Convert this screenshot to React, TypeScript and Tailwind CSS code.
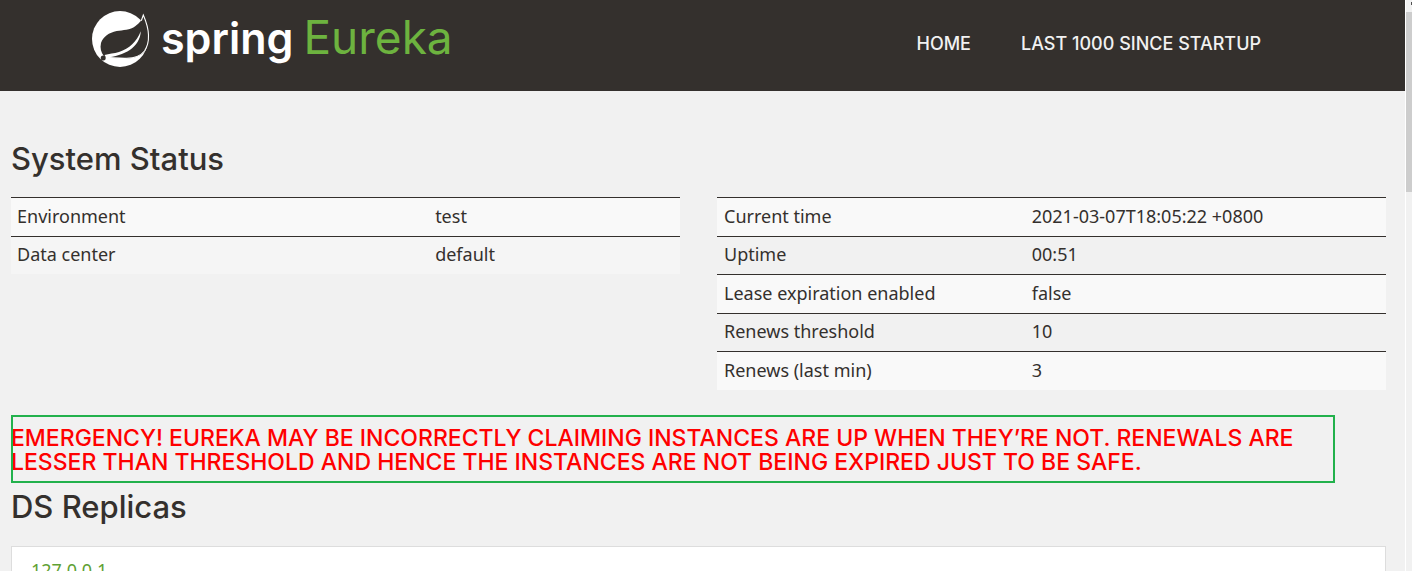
import React from "react";

type Row = { label: string; value: string };

const environmentRows: Row[] = [
  { label: "Environment", value: "test" },
  { label: "Data center", value: "default" },
];

const runtimeRows: Row[] = [
  { label: "Current time", value: "2021-03-07T18:05:22 +0800" },
  { label: "Uptime", value: "00:51" },
  { label: "Lease expiration enabled", value: "false" },
  { label: "Renews threshold", value: "10" },
  { label: "Renews (last min)", value: "3" },
];

function SpringLeaf() {
  return (
    <svg viewBox="0 0 58 58" className="size-[58px] shrink-0 overflow-visible" aria-hidden="true">
      <circle cx="29" cy="29" r="28" fill="#fff" />
      <path
        d="M52.3 5C51.5 9 49 13 44.5 16C39 20.2 32 20 25.7 21C18 22.5 12 27 10 33C8.8 38 10 42.5 13 46.3C20 48.5 29 48.4 35.7 48.3C43 48.2 49 46.5 53.5 41.5C60 32.5 57.5 17 52.3 5Z"
        fill="#34302d"
      />
      <path
        d="M50.3 10.8L52.3 5C57.5 17 60 31 53.5 41C49 46.8 43 48.2 35.7 48.3C29 48.5 23 47.8 15 47.4"
        fill="none"
        stroke="#fff"
        strokeWidth="1.1"
      />
      <path
        d="M49.8 21.3C45.5 32 38.5 38.5 28 42C23 43.6 18 43.6 13.5 45L15 47.6C33 46 49 37.5 49.8 21.3Z"
        fill="#fff"
      />
      <circle cx="12.2" cy="48" r="2.5" fill="#34302d" />
    </svg>
  );
}

function StatusTable({ caption, rows, labelCell, valueCell, evenRow }: { caption: string; rows: Row[]; labelCell: string; valueCell: string; evenRow: string }) {
  return (
    <table aria-label={caption} className="w-full table-fixed border-separate border-spacing-0 text-left text-lg leading-6">
      <tbody>
        {rows.map((row) => (
          <tr key={row.label} className={`odd:h-[39px] even:h-[38px] odd:bg-[#f9f9f9] ${evenRow}`}>
            <th scope="row" className={`border-t border-[#34302d] pb-[3px] font-normal ${labelCell}`}>
              {row.label}
            </th>
            <td className={`border-t border-[#34302d] pb-[3px] ${valueCell}`}>{row.value}</td>
          </tr>
        ))}
      </tbody>
    </table>
  );
}

export default function App() {
  return (
    <div className="flex h-screen overflow-hidden bg-[#f1f1f1] font-['Noto_Sans',sans-serif] text-[#34302d]">
      <div className="min-w-0 flex-1 overflow-hidden">
        <header className="flex h-[91px] items-start justify-between bg-[#34302d] pr-36 pl-[91px]">
          <a href="#home" className="flex items-start gap-3 pt-[10px] whitespace-nowrap">
            <SpringLeaf />
            <span className="flex items-baseline gap-[10px] font-['Inter',sans-serif] leading-[54px]">
              <span className="text-[43px] font-semibold text-white">spring</span>
              <span className="text-[46px] text-[#6db33f]">Eureka</span>
            </span>
          </a>
          <nav className="flex gap-[50px] pt-8 font-['Inter',sans-serif] text-[18px] leading-6 font-medium whitespace-nowrap text-[#f1f1f1]">
            <a href="#home">HOME</a>
            <a href="#lastn">LAST 1000 SINCE STARTUP</a>
          </nav>
        </header>

        <main className="pr-[19px] pl-[11px]">
          <h1 className="pt-[50px] font-['Inter',sans-serif] text-[31px] leading-9 font-medium">System Status</h1>
          <div className="mt-5 grid grid-cols-2 items-start gap-[37px]">
            <StatusTable
              caption="Environment"
              rows={environmentRows}
              labelCell="w-[62.5%] px-[6px]"
              valueCell="px-[6px]"
              evenRow="even:bg-[#f5f5f5]"
            />
            <StatusTable
              caption="Runtime"
              rows={runtimeRows}
              labelCell="w-[46%] px-[7px]"
              valueCell="px-[7px]"
              evenRow="even:bg-[#f1f1f1]"
            />
          </div>

          <h4 className="mt-[25px] mr-[51px] pt-[11px] pb-[9px] font-['Inter',sans-serif] text-[23px] leading-6 font-medium text-[#ff0000] outline-2 -outline-offset-2 outline-[#22b14c]">
            EMERGENCY! EUREKA MAY BE INCORRECTLY CLAIMING INSTANCES ARE UP WHEN THEY’RE NOT. RENEWALS ARE LESSER THAN
            THRESHOLD AND HENCE THE INSTANCES ARE NOT BEING EXPIRED JUST TO BE SAFE.
          </h4>

          <h1 className="mt-[6px] font-['Inter',sans-serif] text-[31px] leading-9 font-medium">DS Replicas</h1>
          <ul className="mt-[21px] border border-[#dddddd] bg-white px-[19px] py-[11px] text-lg leading-6">
            <li>
              <a href="http://127.0.0.1" className="text-[#5fa134]">127.0.0.1</a>
            </li>
          </ul>
        </main>
      </div>

      <div aria-hidden="true" className="flex w-[7px] shrink-0 flex-col border-l border-white bg-[#f1f1f1]">
        <div className="flex h-3 justify-end pt-[2px]">
          <div className="h-[3px] w-px bg-[#505050]" />
        </div>
        <div className="h-[180px] bg-[#cdcdcd]" />
      </div>
    </div>
  );
}
